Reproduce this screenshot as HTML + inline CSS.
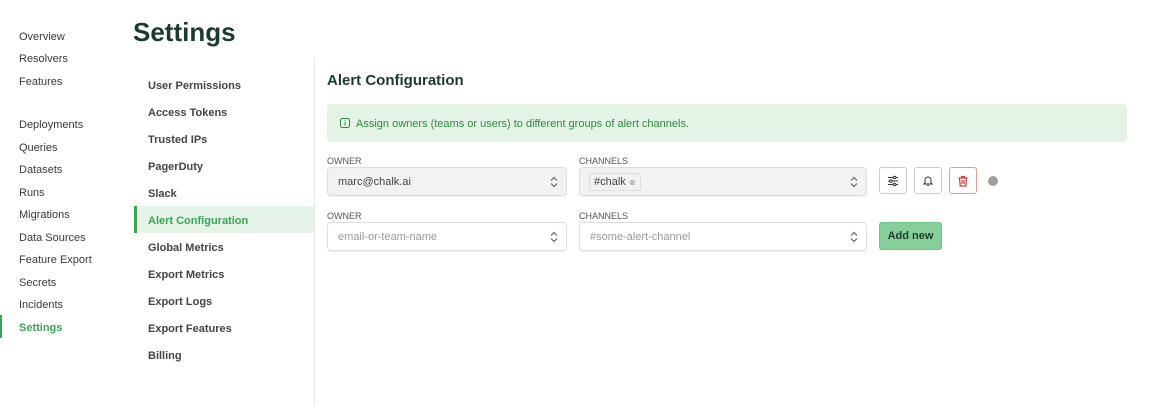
<!DOCTYPE html><html><head><style>
*{margin:0;padding:0;box-sizing:border-box}
body{width:1155px;height:406px;background:#fff;font-family:"Liberation Sans",sans-serif;position:relative;overflow:hidden;color:#333}
.a{position:absolute;white-space:nowrap}
.n{left:19px;font-size:11px;color:#3a3a3a;line-height:14px}
.s{left:148px;font-size:11px;font-weight:bold;color:#444;line-height:14px}
.lab{font-size:9px;color:#555;line-height:10px}
.sel{border:1px solid #dedede;border-radius:4px;height:29px;font-size:11px;line-height:29px;padding-left:10px;box-shadow:0 1px 1px rgba(0,0,0,.06)}
.chev{position:absolute;right:8px;top:8px}
.btn{border:1px solid #ccc;border-radius:3px;width:28px;height:27px;top:167px;display:flex;align-items:center;justify-content:center}
</style></head><body>
<div class="a n" style="top:30px">Overview</div>
<div class="a n" style="top:52px">Resolvers</div>
<div class="a n" style="top:75px">Features</div>
<div class="a n" style="top:118px">Deployments</div>
<div class="a n" style="top:141px">Queries</div>
<div class="a n" style="top:163px">Datasets</div>
<div class="a n" style="top:186px">Runs</div>
<div class="a n" style="top:208px">Migrations</div>
<div class="a n" style="top:231px">Data Sources</div>
<div class="a n" style="top:253px">Feature Export</div>
<div class="a n" style="top:276px">Secrets</div>
<div class="a n" style="top:298px">Incidents</div>
<div class="a n" style="top:321px;color:#3aa655;font-weight:bold">Settings</div>
<div class="a" style="left:0;top:315px;width:2px;height:23px;background:#3aa655"></div>

<div class="a" style="left:133px;top:16px;font-size:26px;font-weight:bold;color:#1d3a2e;line-height:32px">Settings</div>
<div class="a" style="left:314px;top:58px;width:1px;height:348px;background:#e6e6e6"></div>
<div class="a" style="left:134px;top:206px;width:180px;height:27px;background:#e5f3e8;border-left:3px solid #3aa655"></div>
<div class="a s" style="top:79px">User Permissions</div>
<div class="a s" style="top:106px">Access Tokens</div>
<div class="a s" style="top:133px">Trusted IPs</div>
<div class="a s" style="top:160px">PagerDuty</div>
<div class="a s" style="top:187px">Slack</div>
<div class="a s" style="top:214px;color:#3aa655">Alert Configuration</div>
<div class="a s" style="top:241px">Global Metrics</div>
<div class="a s" style="top:268px">Export Metrics</div>
<div class="a s" style="top:295px">Export Logs</div>
<div class="a s" style="top:322px">Export Features</div>
<div class="a s" style="top:349px">Billing</div>

<div class="a" style="left:327px;top:72px;font-size:15px;font-weight:bold;color:#1d3a2e;line-height:18px">Alert Configuration</div>
<div class="a" style="left:327px;top:104px;width:800px;height:38px;background:#e3f3e6;border-radius:4px"></div>
<svg class="a" style="left:340px;top:118px" width="10" height="10" viewBox="0 0 10 10"><rect x=".5" y=".5" width="9" height="9" rx="2" fill="none" stroke="#2e8b3e"/><path d="M5 4v3.5M5 2.3v.8" stroke="#2e8b3e"/></svg>
<div class="a" style="left:356px;top:117px;font-size:11px;color:#2e8b3e;line-height:14px">Assign owners (teams or users) to different groups of alert channels.</div>

<div class="a lab" style="left:327px;top:156px">OWNER</div>
<div class="a lab" style="left:579px;top:156px">CHANNELS</div>
<div class="a sel" style="left:327px;top:167px;width:240px;background:#f2f2f2;color:#444">marc@chalk.ai<svg class="chev" width="8" height="12" viewBox="0 0 8 12"><path d="M1 4.5L4 1.5 7 4.5M1 7.5L4 10.5 7 7.5" fill="none" stroke="#666" stroke-width="1.2"/></svg></div>
<div class="a sel" style="left:579px;top:167px;width:288px;background:#f2f2f2"><span style="position:absolute;left:9px;top:5px;height:18px;line-height:16px;border:1px solid #ddd;border-radius:3px;padding:0 4px;font-size:11px;color:#444">#chalk <span style="font-size:8px;color:#999">⊗</span></span><svg class="chev" width="8" height="12" viewBox="0 0 8 12"><path d="M1 4.5L4 1.5 7 4.5M1 7.5L4 10.5 7 7.5" fill="none" stroke="#666" stroke-width="1.2"/></svg></div>
<div class="a btn" style="left:879px"><svg width="12" height="12" viewBox="0 0 12 12" fill="none" stroke="#333"><path d="M1 2.5h10M1 6h10M1 9.5h10"/><circle cx="7.5" cy="2.5" r="1.3" fill="#fff"/><circle cx="4" cy="6" r="1.3" fill="#fff"/><circle cx="7.5" cy="9.5" r="1.3" fill="#fff"/></svg></div>
<div class="a btn" style="left:914px"><svg width="12" height="12" viewBox="0 0 12 12" fill="none" stroke="#333"><path d="M3 8V5a3 3 0 0 1 6 0v3l1 1H2zM5 10.5h2"/></svg></div>
<div class="a btn" style="left:949px;border-color:#eb9a9a"><svg width="12" height="12" viewBox="0 0 12 12" fill="none" stroke="#dc3a3a" stroke-width="1.2"><path d="M1.5 3h9M4.5 3V1.5h3V3M2.5 3l.7 8h5.6l.7-8M5 5v4M7 5v4"/></svg></div>
<div class="a" style="left:988px;top:176px;width:10px;height:10px;border-radius:50%;background:#a0a0a0"></div>

<div class="a lab" style="left:327px;top:211px">OWNER</div>
<div class="a lab" style="left:579px;top:211px">CHANNELS</div>
<div class="a sel" style="left:327px;top:222px;width:240px;color:#999">email-or-team-name<svg class="chev" width="8" height="12" viewBox="0 0 8 12"><path d="M1 4.5L4 1.5 7 4.5M1 7.5L4 10.5 7 7.5" fill="none" stroke="#666" stroke-width="1.2"/></svg></div>
<div class="a sel" style="left:579px;top:222px;width:288px;color:#999">#some-alert-channel<svg class="chev" width="8" height="12" viewBox="0 0 8 12"><path d="M1 4.5L4 1.5 7 4.5M1 7.5L4 10.5 7 7.5" fill="none" stroke="#666" stroke-width="1.2"/></svg></div>
<div class="a" style="left:879px;top:222px;width:63px;height:28px;background:#86cf9b;border:1px solid #74c08b;border-radius:3px;font-size:11px;font-weight:bold;color:#1f3d2b;text-align:center;line-height:26px">Add new</div>
</body></html>
